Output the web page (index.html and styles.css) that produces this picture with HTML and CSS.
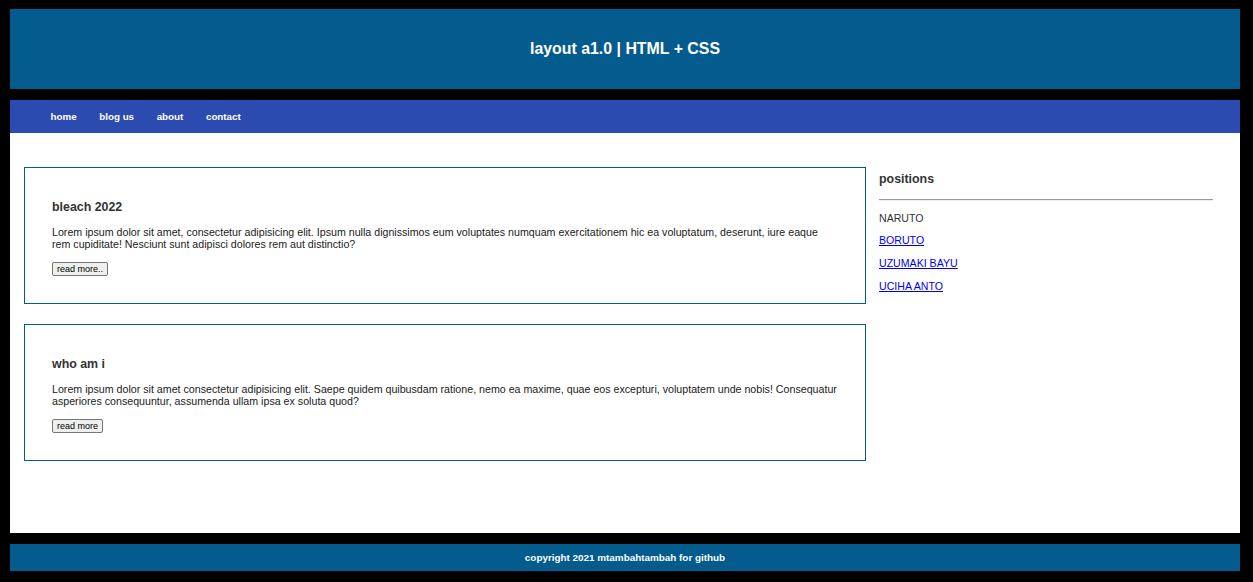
FILE: index.html
```html
<!DOCTYPE html>
<html lang="en">
<head>
<meta charset="utf-8">
<title>layout a1.0</title>
<link rel="stylesheet" href="styles.css">
</head>
<body>
  <header class="site-header">
    <h1 class="site-title">layout a1.0 | HTML + CSS</h1>
  </header>
  <nav class="site-nav">
    <a class="nav-link" href="#">home</a>
    <a class="nav-link" href="#">blog us</a>
    <a class="nav-link" href="#">about</a>
    <a class="nav-link" href="#">contact</a>
  </nav>
  <main class="site-main">
    <section class="posts">
      <article class="post">
        <h2 class="post-title">bleach 2022</h2>
        <p class="post-text">Lorem ipsum dolor sit amet, consectetur adipisicing elit. Ipsum nulla dignissimos eum voluptates numquam exercitationem hic ea voluptatum, deserunt, iure eaque rem cupiditate! Nesciunt sunt adipisci dolores rem aut distinctio?</p>
        <button class="post-btn">read more..</button>
      </article>
      <article class="post">
        <h2 class="post-title">who am i</h2>
        <p class="post-text">Lorem ipsum dolor sit amet consectetur adipisicing elit. Saepe quidem quibusdam ratione, nemo ea maxime, quae eos excepturi, voluptatem unde nobis! Consequatur asperiores consequuntur, assumenda ullam ipsa ex soluta quod?</p>
        <button class="post-btn">read more</button>
      </article>
    </section>
    <aside class="sidebar">
      <h3 class="sidebar-title">positions</h3>
      <hr class="sidebar-rule">
      <ul class="sidebar-list">
        <li class="sidebar-item">NARUTO</li>
        <li class="sidebar-item"><a class="sidebar-link" href="#">BORUTO</a></li>
        <li class="sidebar-item"><a class="sidebar-link" href="#">UZUMAKI BAYU</a></li>
        <li class="sidebar-item"><a class="sidebar-link" href="#">UCIHA ANTO</a></li>
      </ul>
    </aside>
  </main>
  <footer class="site-footer">copyright 2021 mtambahtambah for github</footer>
</body>
</html>
```

FILE: styles.css
```css
* { box-sizing: border-box; }

html, body { height: 100%; }

body {
  margin: 0;
  padding: 9px 13px 11px 10px;
  background: #000;
  font-family: "Liberation Sans", Arial, sans-serif;
  display: flex;
  flex-direction: column;
}

.site-header {
  height: 80px;
  background: #045b8e;
  display: flex;
  align-items: center;
  justify-content: center;
  flex-shrink: 0;
}

.site-title {
  margin: 0;
  color: #fff;
  font-size: 15.9px;
  font-weight: bold;
}

.site-nav {
  margin-top: 11px;
  height: 33px;
  background: #2b4bb0;
  display: flex;
  align-items: center;
  gap: 22.6px;
  padding-left: 40.5px;
  flex-shrink: 0;
}

.nav-link {
  color: #fff;
  text-decoration: none;
  font-weight: bold;
  font-size: 9.8px;
}

.site-main {
  height: 400px;
  background: #fff;
  display: flex;
  gap: 13px;
  padding: 34px 27px 0 14px;
  flex-shrink: 0;
}

.posts {
  width: 842px;
  display: flex;
  flex-direction: column;
  gap: 20px;
  flex-shrink: 0;
}

.post {
  border: 1px solid #045b8e;
  padding: 32px 27px 27px 27px;
}

.post-title {
  margin: 0;
  font-size: 12.4px;
  line-height: 14px;
  color: #333;
}

.post-text {
  margin: 12px 0 12px;
  font-size: 10.66px;
  line-height: 12px;
  color: #222;
}

.post-btn {
  display: block;
  font-family: "Liberation Sans", Arial, sans-serif;
  font-size: 9px;
  height: 14px;
  line-height: 10px;
  padding: 0 4px;
  border: 1px solid #767676;
  border-radius: 2px;
  background: #efefef;
  color: #000;
}

.sidebar {
  flex: 1;
  min-width: 0;
}

.sidebar-title {
  margin: 4.5px 0 0;
  font-size: 12.4px;
  line-height: 14px;
  color: #333;
}

.sidebar-rule {
  margin: 13.5px 0 0;
  border: 0;
  border-top: 1px solid #9a9a9a;
  border-bottom: 1px solid #eeeeee;
}

.sidebar-list {
  list-style: none;
  margin: 10.5px 0 0;
  padding: 0;
  display: flex;
  flex-direction: column;
  gap: 10.7px;
}

.sidebar-item {
  font-size: 10.6px;
  line-height: 12px;
  color: #333;
}

.sidebar-link {
  color: #0000ee;
}

.site-footer {
  margin-top: 11px;
  height: 27px;
  background: #045b8e;
  color: #fff;
  font-weight: bold;
  font-size: 9.9px;
  display: flex;
  align-items: center;
  justify-content: center;
  flex-shrink: 0;
}
```
